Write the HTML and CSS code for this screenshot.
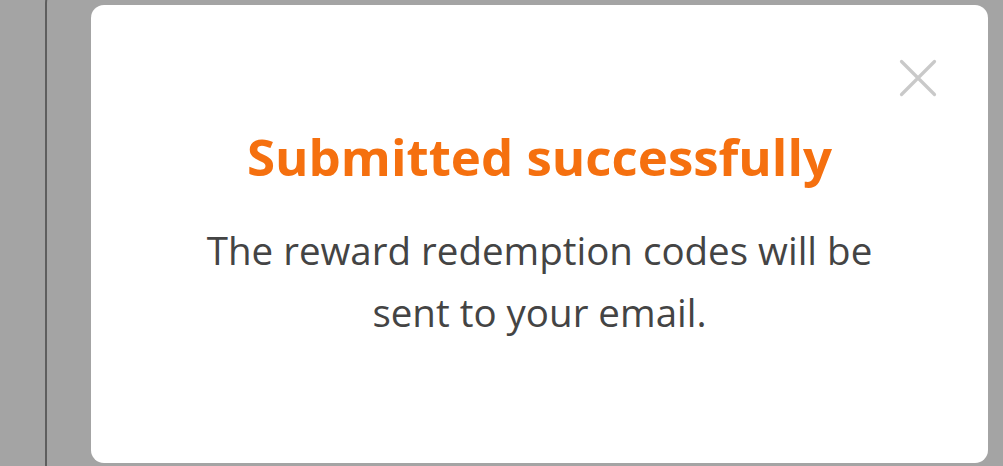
FILE: index.html
```html
<!DOCTYPE html>
<html lang="en">
<head>
  <meta charset="UTF-8">
  <title>Rewards</title>
  <link rel="stylesheet" href="styles.css">
</head>
<body>
  <div class="page">
    <div class="sheet"></div>
  </div>

  <div class="overlay">
    <div class="dialog">
      <button type="button" class="close" aria-label="Close">
        <svg viewBox="0 0 38 38" width="38" height="38">
          <path d="M2.5 2.5 L35.5 35.5 M35.5 2.5 L2.5 35.5" stroke="#c9c9c9" stroke-width="3.2" stroke-linecap="round" fill="none"/>
        </svg>
      </button>
      <h2 class="title">Submitted successfully</h2>
      <p class="message">The reward redemption codes will be<br>sent to your email.</p>
    </div>
  </div>
</body>
</html>
```

FILE: styles.css
```css
body {
  margin: 0;
  background-color: #a4a4a4;
  font-family: "Open Sans", "Noto Sans", sans-serif;
  height: 466px;
  overflow: hidden;
}
.page {
  padding-left: 45px;
}
.sheet {
  margin-top: -30px;
  height: 494px;
  border-left: 2px solid #5e5e5e;
  border-top: 2px solid #5e5e5e;
  border-top-left-radius: 34px;
}
.overlay {
  position: fixed;
  top: 0;
  left: 0;
  right: 0;
  bottom: 0;
  padding: 5px 15px 3px 91px;
  display: flex;
}
.dialog {
  position: relative;
  flex: 1;
  background-color: white;
  border-radius: 13px;
  display: flex;
  flex-direction: column;
  align-items: center;
  padding-top: 119px;
}
.close {
  position: absolute;
  top: 54px;
  right: 51px;
  padding: 0;
  border: none;
  background: none;
  line-height: 0;
}
.title {
  margin: 0;
  color: #f5700f;
  font-size: 51px;
  font-weight: bold;
  line-height: 64px;
  font-variant-ligatures: none;
}
.message {
  margin: 31px 0 0;
  color: #444444;
  font-size: 38.5px;
  line-height: 62px;
  text-align: center;
}
```
